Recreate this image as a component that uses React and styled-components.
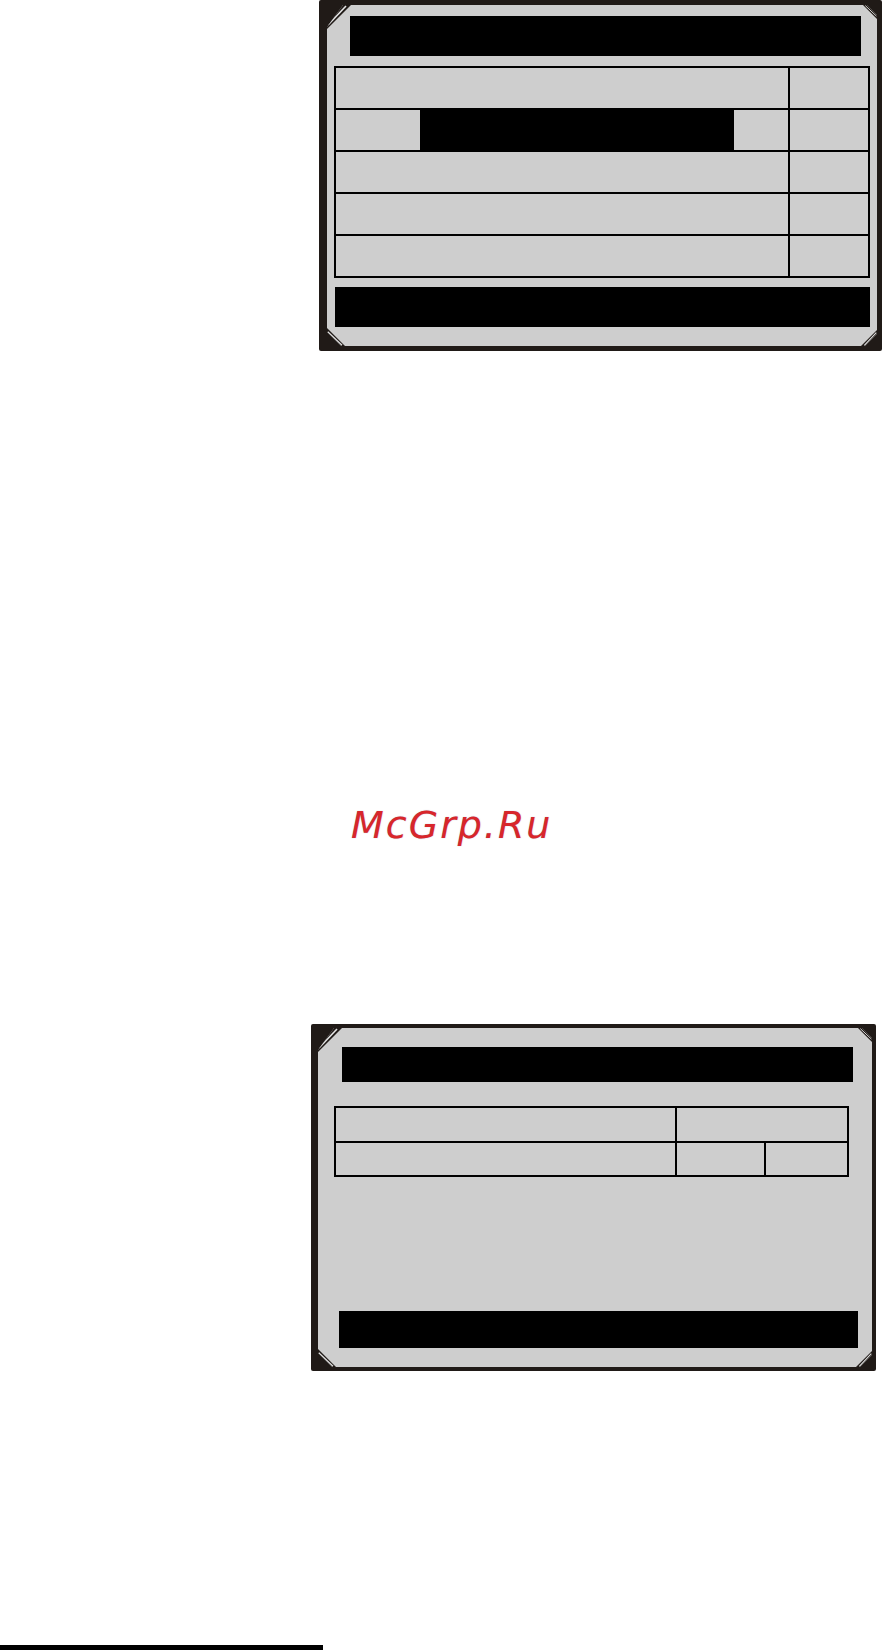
import React from "react";
import styled, { createGlobalStyle } from "styled-components";

const Global = createGlobalStyle`
  html, body { margin: 0; padding: 0; background: #ffffff; }
  body { font-family: "DejaVu Sans", "Liberation Sans", sans-serif; }
`;

const Page = styled.div`
  width: 886px;
  height: 1650px;
  display: flex;
  flex-direction: column;
  overflow: hidden;
`;

const Frame = styled.div`
  box-sizing: border-box;
  margin-left: ${(p) => p.$left}px;
  margin-top: ${(p) => p.$top}px;
  width: ${(p) => p.$width}px;
  background: #201a17;
  padding: ${(p) => p.$pad};
  border-radius: 2px;
`;

const Screen = styled.div`
  position: relative;
  box-sizing: border-box;
  height: ${(p) => p.$height}px;
  background: #cecece;
  display: flex;
  flex-direction: column;
  padding-bottom: 19px;
  clip-path: polygon(16px 0, calc(100% - 10px) 0, 100% 10px, 100% calc(100% - 12px), calc(100% - 12px) 100%, 14px 100%, 0 calc(100% - 14px), 0 22px);
`;

const CornerSvg = styled.svg`
  position: absolute;
  width: ${(p) => p.$size}px;
  height: ${(p) => p.$size}px;
  ${(p) => (p.$pos.includes("t") ? "top: 0;" : "bottom: 0;")}
  ${(p) => (p.$pos.includes("l") ? "left: 0;" : "right: 0;")}
`;

const Corner = ({ pos, size }) => {
  const rot = { tl: 0, tr: 90, br: 180, bl: 270 }[pos];
  return (
    <CornerSvg $pos={pos} $size={size} viewBox="0 0 24 24">
      <g transform={`rotate(${rot} 12 12)`}>
        <polygon points="0,0 24,0 0,24" fill="#201a17" />
        <line x1="1" y1="20" x2="19" y2="1" stroke="#e4e4e4" strokeWidth="1.6" />
      </g>
    </CornerSvg>
  );
};

const Bar = styled.div`
  background: #000;
  height: ${(p) => p.$h}px;
  margin: ${(p) => p.$m};
  flex-shrink: 0;
`;

const Footer = styled(Bar)`
  margin-top: auto;
`;

const Table = styled.div`
  border: 2px solid #000;
  margin: ${(p) => p.$m};
  display: flex;
  flex-direction: column;
  background: #cecece;
`;

const Row = styled.div`
  display: flex;
  height: ${(p) => p.$h}px;
  & + & { border-top: 2px solid #000; }
`;

const Cell = styled.div`
  box-sizing: border-box;
  flex: ${(p) => (p.$w ? `0 0 ${p.$w}px` : "1 1 auto")};
  display: flex;
  & + & { border-left: 2px solid #000; }
`;

const Fill = styled.div`
  background: ${(p) => (p.$dark ? "#000" : "transparent")};
  flex: ${(p) => (p.$w ? `0 0 ${p.$w}px` : "1 1 auto")};
`;

const Watermark = styled.div`
  margin-top: 455px;
  margin-left: 351px;
  font-family: "DejaVu Sans", sans-serif;
  font-style: italic;
  font-size: 38px;
  line-height: 38px;
  letter-spacing: 2px;
  color: #d8262b;
  text-shadow: 0 0 1px rgba(90, 90, 140, 0.5);
`;

const Rule = styled.div`
  margin-top: auto;
  width: 323px;
  height: 5px;
  background: #000;
`;

export default function App() {
  return (
    <Page>
      <Global />
      <Frame $left={319} $top={0} $width={563} $pad="5px 5px 5px 8px">
        <Screen $height={341}>
          <Corner pos="tl" size={24} />
          <Corner pos="tr" size={14} />
          <Corner pos="bl" size={18} />
          <Corner pos="br" size={16} />
          <Bar $h={40} $m="11px 16px 0 23px" />
          <Table $m="10px 7px 0 7px">
            {[0, 1, 2, 3, 4].map((i) => (
              <Row key={i} $h={40}>
                <Cell>
                  {i === 1 ? (
                    <>
                      <Fill $w={84} />
                      <Fill $w={314} $dark />
                      <Fill />
                    </>
                  ) : null}
                </Cell>
                <Cell $w={80} />
              </Row>
            ))}
          </Table>
          <Footer $h={40} $m="0 7px 0 8px" />
        </Screen>
      </Frame>

      <Watermark>McGrp.Ru</Watermark>

      <Frame $left={311} $top={180} $width={565} $pad="4px 4px 4px 7px">
        <Screen $height={339}>
          <Corner pos="tl" size={24} />
          <Corner pos="tr" size={14} />
          <Corner pos="bl" size={18} />
          <Corner pos="br" size={16} />
          <Bar $h={35} $m="19px 19px 0 24px" />
          <Table $m="24px 23px 0 16px">
            <Row $h={33}>
              <Cell $w={339} />
              <Cell />
            </Row>
            <Row $h={32}>
              <Cell $w={339} />
              <Cell $w={89} />
              <Cell />
            </Row>
          </Table>
          <Footer $h={37} $m="0 14px 0 21px" />
        </Screen>
      </Frame>

      <Rule />
    </Page>
  );
}
